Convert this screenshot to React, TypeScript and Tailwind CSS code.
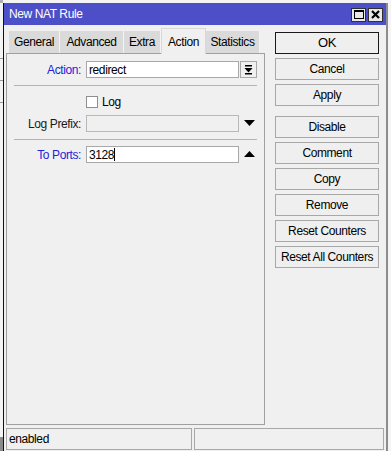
import React from 'react';

const font = { fontFamily: '"Liberation Sans", Arial, sans-serif' };

function TitleButton({ kind }: { kind: 'max' | 'close' }) {
  return (
    <div className="w-[15px] h-[14px] bg-[#e8e8e8] border border-[#303030] flex items-center justify-center">
      {kind === 'max' ? (
        <svg width="10" height="9" viewBox="0 0 10 9">
          <rect x="0.5" y="0.5" width="9" height="8" fill="none" stroke="#000" />
          <rect x="0" y="0" width="10" height="2" fill="#000" />
        </svg>
      ) : (
        <svg width="9" height="9" viewBox="0 0 9 9">
          <path d="M1 1 L8 8 M8 1 L1 8" stroke="#000" strokeWidth="2.2" />
        </svg>
      )}
    </div>
  );
}

function Tab({ label, active, w }: { label: string; active?: boolean; w: string }) {
  if (active) {
    return (
      <div className={`${w} h-[26px] -mb-px bg-[#f0f0f0] border-t border-x border-[#d8d8d8] flex items-center justify-center z-10`}>
        {label}
      </div>
    );
  }
  return (
    <div className={`${w} h-[22px] bg-[#dadada] border-r border-[#f4f4f4] flex items-center justify-center`}>
      {label}
    </div>
  );
}

function Btn({ label, primary }: { label: string; primary?: boolean }) {
  return (
    <div
      className={`w-[104px] h-[22px] flex items-center justify-center bg-[#efefef] border ${
        primary ? 'border-[#1a1a1a] text-[13px]' : 'border-[#a8a8a8]'
      }`}
    >
      {label}
    </div>
  );
}

function Label({ text, blue }: { text: string; blue?: boolean }) {
  return (
    <div className={`w-[75px] pr-[1px] text-right ${blue ? 'text-[#2323d8]' : 'text-[#1a1a1a]'}`}>{text}</div>
  );
}

function Separator() {
  return <div className="ml-[7px] w-[243px] h-px bg-[#b4b4b4]" />;
}

export default function App() {
  return (
    <div
      className="w-[391px] h-[451px] bg-[#f4f4f4] flex text-[12px] tracking-[-0.4px] text-black overflow-hidden"
      style={font}
    >
      {/* bits of the window behind */}
      <div className="w-[3px] flex flex-col">
        <div className="h-[3px] bg-[#b0b0b0]" />
        <div className="h-[55px] bg-[#f4f4f4]" />
        <div className="h-[22px] border-t border-[#9a9a9a] bg-[#f4f4f4]" />
        <div className="h-[22px] border-t border-[#9a9a9a] bg-[#f4f4f4]" />
        <div className="h-[30px] border-t border-[#9a9a9a] bg-[#f4f4f4]" />
        <div className="flex-1 bg-[#f4f4f4]" />
        <div className="h-[14px] bg-[#8a8a8a]" />
      </div>

      <div className="w-[385px] h-[451px] mt-[3px] flex flex-col border-l border-[#111] border-r-2 border-r-[#8c8c8c] bg-[#f0f0f0]">
        {/* title bar */}
        <div className="h-[22px] bg-[#4d4fc9] flex items-center justify-between pl-[5px] pr-[3px]">
          <span className="text-white text-[12px]">New NAT Rule</span>
          <div className="flex gap-[2px] mt-[1px]">
            <TitleButton kind="max" />
            <TitleButton kind="close" />
          </div>
        </div>

        <div className="flex pl-[2px] pt-[3px]">
          {/* left: tabs + panel */}
          <div className="w-[259px] flex flex-col">
            <div className="h-[25px] flex items-end pl-[3px]">
              <Tab label="General" w="w-[51px]" />
              <Tab label="Advanced" w="w-[64px]" />
              <Tab label="Extra" w="w-[37px]" />
              <Tab label="Action" w="w-[45px]" active />
              <Tab label="Statistics" w="w-[54px]" />
            </div>
            <div className="h-[372px] border border-[#a0a0a0] bg-[#f0f0f0] flex flex-col">
              <div className="mt-[7px] h-[17px] flex items-center">
                <Label text="Action:" blue />
                <div className="ml-[4px] w-[153px] h-[17px] bg-white border border-[#a8a8a8] flex items-center pl-[2px]">
                  redirect
                </div>
                <div className="ml-[1px] w-[17px] h-[17px] border border-[#a8a8a8] bg-[#f0f0f0] flex items-center justify-center">
                  <svg width="9" height="10" viewBox="0 0 9 10">
                    <rect x="1" y="0" width="7" height="1.5" fill="#000" />
                    <polygon points="0.5,3 8.5,3 4.5,7.5" fill="#000" />
                    <rect x="1" y="8" width="7" height="1.5" fill="#000" />
                  </svg>
                </div>
              </div>
              <div className="mt-[7px]">
                <Separator />
              </div>
              <div className="mt-[10px] h-[12px] flex items-center">
                <div className="ml-[79px] w-[12px] h-[12px] bg-white border border-[#8f8f8f]" />
                <span className="ml-[4px]">Log</span>
              </div>
              <div className="mt-[7px] h-[17px] flex items-center">
                <Label text="Log Prefix:" />
                <div className="ml-[4px] w-[153px] h-[17px] bg-[#f0f0f0] border border-[#b8b8b8]" />
                <svg className="ml-[5px]" width="11" height="7" viewBox="0 0 11 7">
                  <polygon points="0,0 11,0 5.5,6" fill="#000" />
                </svg>
              </div>
              <div className="mt-[7px]">
                <Separator />
              </div>
              <div className="mt-[6px] h-[17px] flex items-center">
                <Label text="To Ports:" blue />
                <div className="ml-[4px] w-[153px] h-[17px] bg-white border border-[#a8a8a8] flex items-center pl-[2px]">
                  <span>3128</span>
                  <span className="w-px h-[13px] bg-black" />
                </div>
                <svg className="ml-[5px]" width="11" height="7" viewBox="0 0 11 7">
                  <polygon points="0,6 11,6 5.5,0" fill="#000" />
                </svg>
              </div>
            </div>
          </div>

          {/* right: buttons */}
          <div className="ml-[10px] mt-[4px] flex flex-col gap-[4px]">
            <Btn label="OK" primary />
            <Btn label="Cancel" />
            <Btn label="Apply" />
            <div className="mt-[6px]">
              <Btn label="Disable" />
            </div>
            <Btn label="Comment" />
            <Btn label="Copy" />
            <Btn label="Remove" />
            <Btn label="Reset Counters" />
            <Btn label="Reset All Counters" />
          </div>
        </div>

        {/* status bar */}
        <div className="mt-[3px] ml-[2px] flex gap-[2px]">
          <div className="w-[186px] h-[22px] border border-[#a8a8a8] flex items-center pl-[2px]">enabled</div>
          <div className="w-[190px] h-[22px] border border-[#a8a8a8]" />
        </div>
      </div>
      <div className="flex-1 bg-[#f4f4f4]" />
    </div>
  );
}
